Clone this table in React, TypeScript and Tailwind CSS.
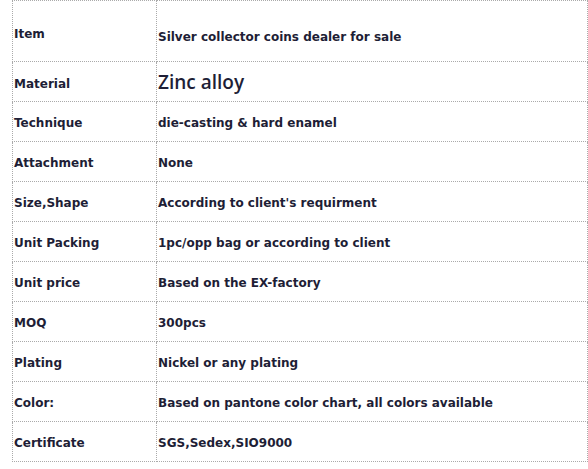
import React from "react";

const rows: [string, string][] = [
  ["Technique", "die-casting & hard enamel"],
  ["Attachment", "None"],
  ["Size,Shape", "According to client's requirment"],
  ["Unit Packing", "1pc/opp bag or according to client"],
  ["Unit price", "Based on the EX-factory"],
  ["MOQ", "300pcs"],
  ["Plating", "Nickel or any plating"],
  ["Color:", "Based on pantone color chart, all colors available"],
  ["Certificate", "SGS,Sedex,SIO9000"],
];

export default function App() {
  const td = "border border-dotted border-[#aaaaaa] align-middle p-0";
  return (
    <div className="w-[588px] h-[469px] bg-white pl-[12px] text-[#1e1e36]" style={{ fontFamily: "'DejaVu Sans', sans-serif" }}>
      <table className="border-collapse w-[576px] table-fixed">
        <colgroup>
          <col className="w-[144px]" />
          <col />
        </colgroup>
        <tbody>
          <tr className="h-[61px]">
            <td className={`${td} pl-[1px] pt-[5px] text-[12px] font-bold`}>Item</td>
            <td className={`${td} pl-[1px] pt-[12px] text-[12px] font-bold`}>Silver collector coins dealer for sale</td>
          </tr>
          <tr className="h-[40px]">
            <td className={`${td} pl-[1px] pt-[4px] text-[12px] font-bold`}>Material</td>
            <td className={`${td} pl-[1px] pt-[1px] text-[19px] font-semibold`} style={{ fontFamily: "'Open Sans', sans-serif" }}>Zinc alloy</td>
          </tr>
          {rows.map(([a, b]) => (
            <tr key={a} className="h-[40px]">
              <td className={`${td} pl-[1px] pt-[3px] text-[12px] font-bold`}>{a}</td>
              <td className={`${td} pl-[1px] pt-[3px] text-[12px] font-bold`}>{b}</td>
            </tr>
          ))}
        </tbody>
      </table>
    </div>
  );
}
